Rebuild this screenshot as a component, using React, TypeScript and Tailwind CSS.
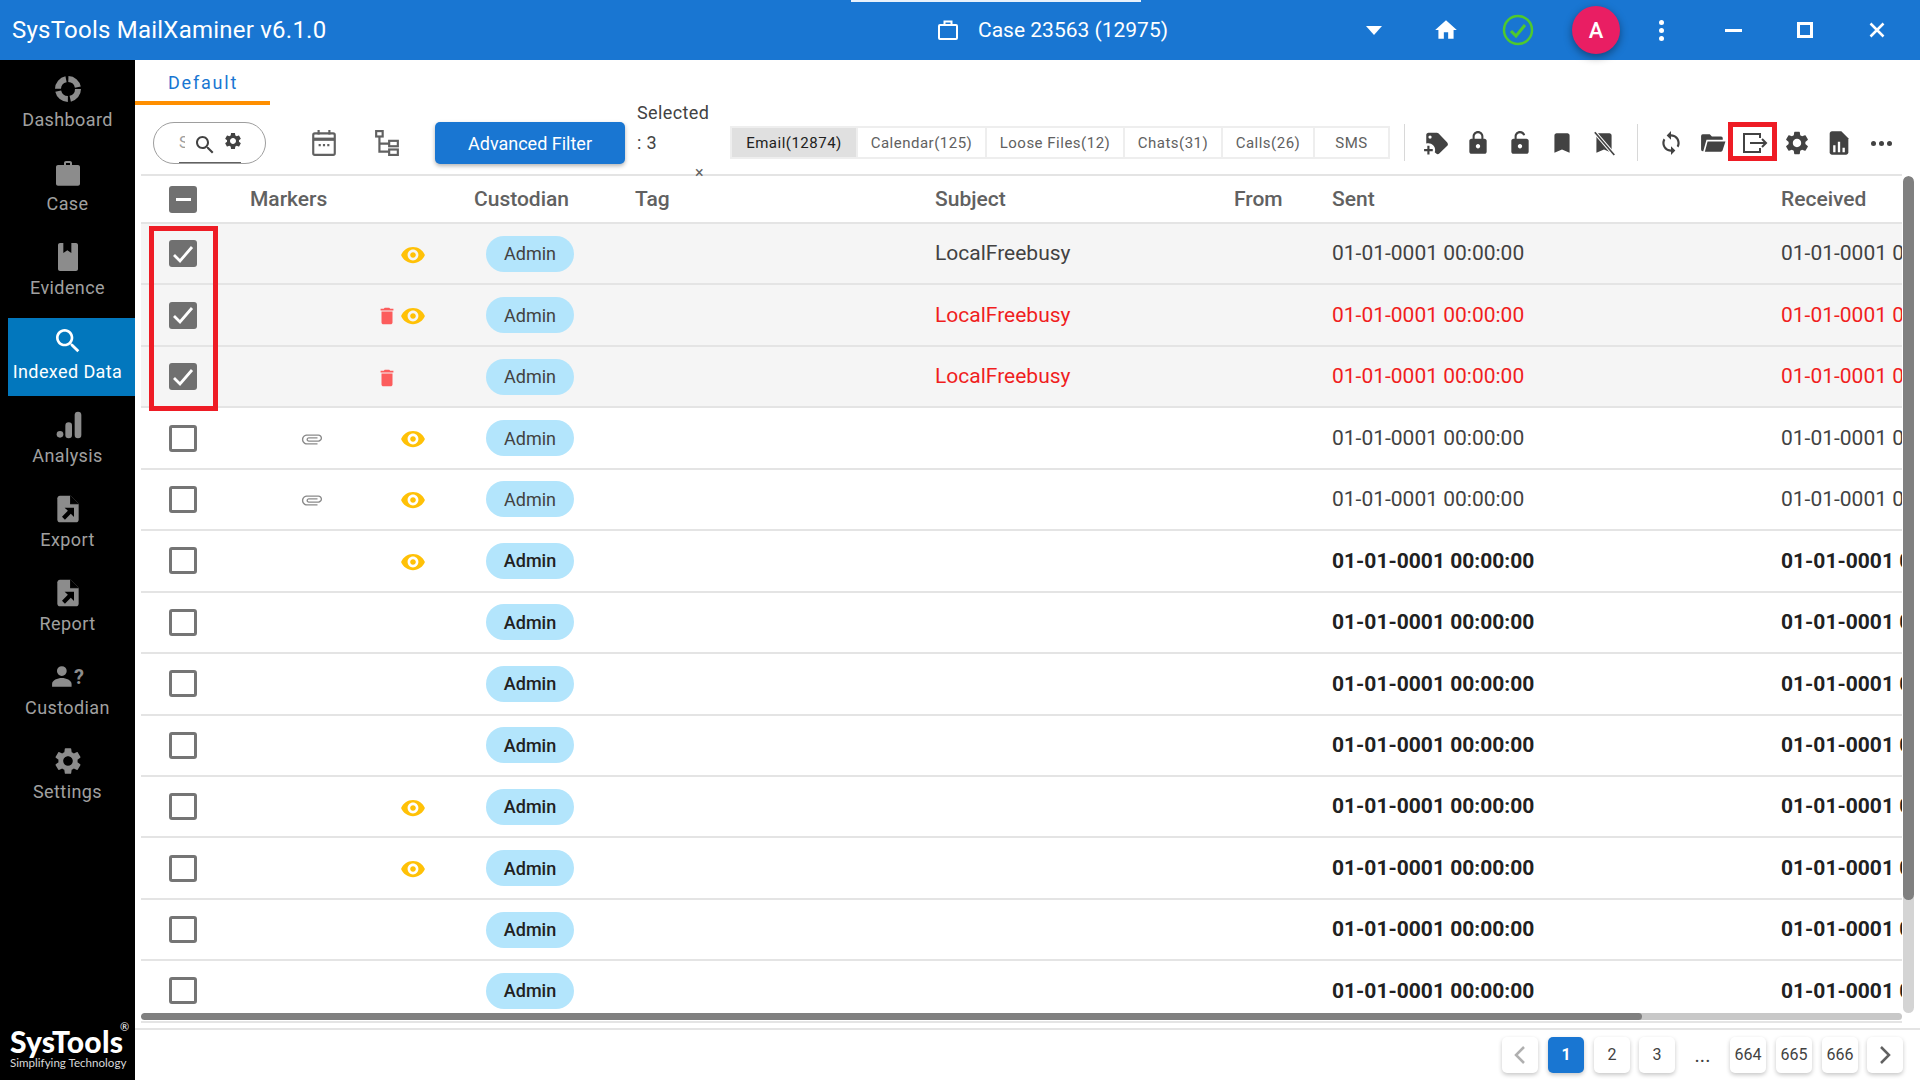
import React from "react";

const P = {
  home: "M10 20v-6h4v6h5v-8h3L12 3 2 12h3v8z",
  lock: "M18 8h-1V6c0-2.76-2.24-5-5-5S7 3.24 7 6v2H6c-1.1 0-2 .9-2 2v10c0 1.1.9 2 2 2h12c1.1 0 2-.9 2-2V10c0-1.1-.9-2-2-2zm-6 9c-1.1 0-2-.9-2-2s.9-2 2-2 2 .9 2 2-.9 2-2 2zm3.1-9H8.9V6c0-1.71 1.39-3.1 3.1-3.1 1.71 0 3.1 1.39 3.1 3.1v2z",
  unlock: "M18 8H8.9V6c0-1.71 1.39-3.1 3.1-3.1 1.4 0 2.6.95 3 2.2l1.8-.6C16.2 2.5 14.3 1 12 1 9.24 1 7 3.24 7 6v2H6c-1.1 0-2 .9-2 2v10c0 1.1.9 2 2 2h12c1.1 0 2-.9 2-2V10c0-1.1-.9-2-2-2zm-6 9c-1.1 0-2-.9-2-2s.9-2 2-2 2 .9 2 2-.9 2-2 2z",
  bookmark: "M17 3H7c-1.1 0-1.99.9-1.99 2L5 21l7-3 7 3V5c0-1.1-.9-2-2-2z",
  gear: "M19.14 12.94c.04-.3.06-.61.06-.94 0-.32-.02-.64-.07-.94l2.03-1.58c.18-.14.23-.41.12-.61l-1.92-3.32c-.12-.22-.37-.29-.59-.22l-2.39.96c-.5-.38-1.03-.7-1.62-.94l-.36-2.54c-.04-.24-.24-.41-.48-.41h-3.84c-.24 0-.43.17-.47.41l-.36 2.54c-.59.24-1.13.57-1.62.94l-2.39-.96c-.22-.08-.47 0-.59.22L2.74 8.87c-.12.21-.08.47.12.61l2.03 1.58c-.05.3-.09.63-.09.94s.02.64.07.94l-2.03 1.58c-.18.14-.23.41-.12.61l1.92 3.32c.12.22.37.29.59.22l2.39-.96c.5.38 1.03.7 1.62.94l.36 2.54c.05.24.24.41.48.41h3.84c.24 0 .44-.17.47-.41l.36-2.54c.59-.24 1.13-.56 1.62-.94l2.39.96c.22.08.47 0 .59-.22l1.92-3.32c.12-.22.07-.47-.12-.61l-2.01-1.58zM12 15.6c-1.98 0-3.6-1.62-3.6-3.6s1.62-3.6 3.6-3.6 3.6 1.62 3.6 3.6-1.62 3.6-3.6 3.6z",
  eye: "M12 4.5C7 4.5 2.73 7.61 1 12c1.73 4.39 6 7.5 11 7.5s9.27-3.11 11-7.5c-1.73-4.39-6-7.5-11-7.5zM12 17c-2.76 0-5-2.24-5-5s2.24-5 5-5 5 2.24 5 5-2.24 5-5 5zm0-7.6c-1.44 0-2.6 1.16-2.6 2.6s1.16 2.6 2.6 2.6 2.6-1.16 2.6-2.6-1.16-2.6-2.6-2.6z",
  trash: "M6 19c0 1.1.9 2 2 2h8c1.1 0 2-.9 2-2V7H6v12zM19 4h-3.5l-1-1h-5l-1 1H5v2h14V4z",
  clip: "M16.5 6v11.5c0 2.21-1.79 4-4 4s-4-1.79-4-4V5c0-1.38 1.12-2.5 2.5-2.5s2.5 1.12 2.5 2.5v10.5c0 .55-.45 1-1 1s-1-.45-1-1V6H10v9.5c0 1.38 1.12 2.5 2.5 2.5s2.5-1.12 2.5-2.5V5c0-2.21-1.79-4-4-4S7 2.79 7 5v12.5c0 3.04 2.46 5.5 5.5 5.5s5.5-2.46 5.5-5.5V6h-1.5z",
  search: "M15.5 14h-.79l-.28-.27C15.41 12.59 16 11.11 16 9.5 16 5.91 13.09 3 9.5 3S3 5.91 3 9.5 5.91 16 9.5 16c1.61 0 3.09-.59 4.23-1.57l.27.28v.79l5 4.99L20.49 19l-4.99-5zm-6 0C7.01 14 5 11.99 5 9.5S7.01 5 9.5 5 14 7.01 14 9.5 11.99 14 9.5 14z",
  sync: "M12 4V1L8 5l4 4V6c3.31 0 6 2.69 6 6 0 1.01-.25 1.97-.7 2.8l1.46 1.46C19.54 15.03 20 13.57 20 12c0-4.42-3.58-8-8-8zm0 14c-3.31 0-6-2.69-6-6 0-1.01.25-1.97.7-2.8L5.24 7.74C4.46 8.97 4 10.43 4 12c0 4.42 3.58 8 8 8v3l4-4-4-4v3z",
  folder: "M1 5.5A1.5 1.5 0 0 1 2.5 4H9l2 2h8.5A1.5 1.5 0 0 1 21 7.5V9H6L3 19.5H2.5A1.5 1.5 0 0 1 1 18V5.5zM7 10.5h16.5L20.8 19a1.5 1.5 0 0 1-1.4 1H4.5L7 10.5z",
  person: "M10 11a4.5 4.5 0 1 0 0-9 4.500 4.500 0 0 0 0 9zM10 13c-4 0-9 2-9 5.500V21h18v-2.500C19 15 14 13 10 13z",
};

function Icon({ d, size = 24, className = "" }: { d: string; size?: number; className?: string }) {
  return (
    <svg width={size} height={size} viewBox="0 0 24 24" fill="currentColor" className={className}>
      <path d={d} fillRule="evenodd" />
    </svg>
  );
}

function FileArrow({ size = 32 }: { size?: number }) {
  return (
    <svg width={size} height={size} viewBox="0 0 24 24" fill="currentColor">
      <path d="M14 2H6c-1.100 0-2 .9-2 2v16c0 1.100.9 2 2 2h12c1.100 0 2-.9 2-2V8l-6-6z" />
      <path d="M14 2v6h6" fill="#000" stroke="#000" strokeWidth="0.8" />
      <path d="M9.500 11h7v7l-2.400-2.400-4.400 4.400-2.200-2.200 4.400-4.400z" fill="#000" />
    </svg>
  );
}

const navItems: { label: string; icon: React.ReactNode }[] = [
  {
    label: "Dashboard",
    icon: (
      <svg width="32" height="32" viewBox="0 0 24 24" fill="none" stroke="currentColor" strokeWidth="4.500">
        <circle cx="12" cy="12" r="7.500" strokeDasharray="10 1.800" />
      </svg>
    ),
  },
  {
    label: "Case",
    icon: (
      <svg width="32" height="32" viewBox="0 0 24 24" fill="currentColor">
        <path d="M9 6V4.500C9 3.700 9.700 3 10.500 3h3c.8 0 1.500.7 1.500 1.500V6h4.500c.8 0 1.500.7 1.500 1.500V20c0 .8-.7 1.500-1.500 1.500h-15C3.700 21.500 3 20.800 3 20V7.500C3 6.700 3.700 6 4.500 6H9zm1.500 0h3V4.500h-3V6z" />
      </svg>
    ),
  },
  {
    label: "Evidence",
    icon: (
      <svg width="32" height="32" viewBox="0 0 24 24" fill="currentColor">
        <path d="M6 1.500h2.500V9l3-2 3 2V1.500H18c.8 0 1.500.7 1.500 1.500v18c0 .8-.7 1.500-1.500 1.500H6c-.8 0-1.500-.7-1.500-1.500V3c0-.8.7-1.500 1.500-1.500z" />
      </svg>
    ),
  },
  { label: "Indexed Data", icon: <Icon d={P.search} size={32} /> },
  {
    label: "Analysis",
    icon: (
      <svg width="32" height="32" viewBox="0 0 24 24" fill="currentColor">
        <circle cx="6" cy="19" r="2.500" />
        <rect x="10" y="10" width="5" height="12" rx="2.500" />
        <rect x="17" y="2" width="5" height="20" rx="2.500" />
      </svg>
    ),
  },
  { label: "Export", icon: <FileArrow /> },
  { label: "Report", icon: <FileArrow /> },
  {
    label: "Custodian",
    icon: (
      <div className="flex items-end">
        <Icon d={P.person} size={26} />
        <span className="text-[20px] leading-[26px] font-bold -ml-[3px]">?</span>
      </div>
    ),
  },
  { label: "Settings", icon: <Icon d={P.gear} size={32} /> },
];

function Sidebar() {
  return (
    <aside className="w-[135px] shrink-0 bg-black flex flex-col relative">
      <div className="flex flex-col gap-[6px] pt-[6px]">
        {navItems.map((n) => {
          const active = n.label === "Indexed Data";
          return (
            <div
              key={n.label}
              className={`h-[78px] flex flex-col items-center ${active ? "bg-[#0277bd] text-white ml-[8px] pr-[8px]" : "text-[#8c8c8c]"}`}
            >
              <div className="h-[32px] mt-[7px] flex items-center justify-center">{n.icon}</div>
              <div className={`text-[18px] leading-[24px] mt-[3px] tracking-[0.4px] whitespace-nowrap ${active ? "" : "text-[#a0a0a0]"}`}>{n.label}</div>
            </div>
          );
        })}
      </div>
      <div className="mt-auto pb-[9px] pl-[10px] text-white relative font-['Lato',sans-serif]">
        <div className="text-[30px] leading-[28px] font-black tracking-[0.2px]">SysTools</div>
        <div className="text-[11.6px] leading-[16px] text-[#d8d8d8] whitespace-nowrap">Simplifying Technology</div>
        <span className="absolute left-[120px] top-[-6px] text-[11px] leading-[12px]">®</span>
      </div>
    </aside>
  );
}

function Header() {
  return (
    <header className="h-[60px] bg-[#1976d2] text-white flex items-center relative shrink-0">
      <div className="absolute left-[851px] top-0 w-[290px] h-[2px] bg-white/90" />
      <div className="text-[24px] tracking-[0.23px] pl-[12px] w-[936px] whitespace-nowrap">SysTools MailXaminer v6.1.0</div>
      <svg width="24" height="24" viewBox="0 0 24 24" fill="none" stroke="currentColor" strokeWidth="2" className="shrink-0">
        <rect x="3" y="7" width="18" height="14" rx="1" />
        <path d="M8.500 7V3.500h7V7" />
      </svg>
      <div className="text-[21px] ml-[18px] mt-[2px] w-[384px] whitespace-nowrap">Case 23563 (12975)</div>
      <div className="w-[24px] flex justify-center">
        <div className="w-0 h-0 border-l-[8px] border-r-[8px] border-t-[9px] border-l-transparent border-r-transparent border-t-white" />
      </div>
      <div className="ml-[46px] w-[28px] flex justify-center"><Icon d={P.home} size={26} /></div>
      <div className="ml-[42px] w-[32px] flex justify-center">
        <svg width="32" height="32" viewBox="0 0 32 32" fill="none" stroke="#4fc92d" strokeWidth="2.500">
          <circle cx="16" cy="16" r="14" />
          <path d="M9 17l5 5 9-11" strokeWidth="3" />
        </svg>
      </div>
      <div className="ml-[38px] w-[48px] h-[48px] rounded-full bg-[#e91e63] flex items-center justify-center text-[22px] font-medium shadow-[0_3px_8px_rgba(0,0,0,0.4)]">A</div>
      <div className="ml-[25px] w-[32px] flex flex-col items-center gap-[3px]">
        <span className="w-[5px] h-[5px] rounded-full bg-white" />
        <span className="w-[5px] h-[5px] rounded-full bg-white" />
        <span className="w-[5px] h-[5px] rounded-full bg-white" />
      </div>
      <div className="ml-[40px] w-[32px] flex justify-center"><div className="w-[17px] h-[3px] bg-white" /></div>
      <div className="ml-[40px] w-[32px] flex justify-center"><div className="w-[16px] h-[16px] border-[3px] border-white" /></div>
      <div className="ml-[40px] w-[32px] flex justify-center">
        <svg width="16" height="16" viewBox="0 0 16 16" stroke="currentColor" strokeWidth="2.500"><path d="M1.500 1.500l13 13M14.500 1.500l-13 13" /></svg>
      </div>
    </header>
  );
}

const tabs = [
  ["Email(12874)", 124],
  ["Calendar(125)", 129],
  ["Loose Files(12)", 138],
  ["Chats(31)", 98],
  ["Calls(26)", 92],
  ["SMS", 75],
] as const;

function Toolbar() {
  const iconCls = "w-[42px] flex items-center justify-center text-[#424242]";
  return (
    <div className="h-[69px] flex items-start pt-[17px] shrink-0">
      <div className="ml-[18px] w-[113px] h-[42px] rounded-full border border-[#9e9e9e] flex items-center relative shrink-0">
        <span className="ml-[25px] w-[6px] overflow-hidden text-[16px] text-[#9e9e9e]">S</span>
        <Icon d={P.search} size={24} className="text-[#424242] ml-[8px] mt-[4px]" />
        <Icon d={P.gear} size={20} className="text-[#424242] ml-[6px] -mt-[5px]" />
        <div className="absolute left-[25px] bottom-0 w-[62px] h-[1px] bg-[#616161]" />
      </div>
      <div className="ml-[42px] w-[32px] h-[42px] flex items-center justify-center text-[#616161] shrink-0">
        <svg width="26" height="28" viewBox="0 0 24 26" fill="none" stroke="currentColor" strokeWidth="2">
          <rect x="2" y="4" width="20" height="20" rx="1.500" />
          <path d="M2 9.500h20" strokeWidth="3" />
          <path d="M7 1v4M17 1v4" />
          <path d="M7 15h2M11 15h2M15 15h2" />
        </svg>
      </div>
      <div className="ml-[31px] w-[32px] h-[42px] flex items-center justify-center text-[#616161] shrink-0">
        <svg width="26" height="26" viewBox="0 0 24 24" fill="none" stroke="currentColor" strokeWidth="2">
          <rect x="2" y="1" width="6" height="5" />
          <rect x="14" y="10" width="8" height="5" />
          <rect x="14" y="18" width="8" height="5" />
          <path d="M5 6v14h9M5 12.500h9" />
        </svg>
      </div>
      <button className="ml-[32px] w-[190px] h-[42px] rounded-[5px] bg-[#1976d2] text-white text-[18px] shrink-0 shadow-[0_2px_4px_rgba(0,0,0,0.3)]">Advanced Filter</button>
      <div className="ml-[12px] w-[93px] shrink-0 relative z-10 -mt-[24px] text-[18px] leading-[30px] tracking-[0.4px] text-[#424242]">
        <div>Selected</div>
        <div>: 3</div>
        <span className="absolute left-[58px] top-[67px] text-[16px] leading-[16px] text-[#616161]">×</span>
      </div>
      <div className="h-[33px] mt-[4px] flex border-2 border-[#eeeeee] shrink-0">
        {tabs.map(([t, w], i) => (
          <div
            key={t}
            style={{ width: w }}
            className={`flex items-center justify-center pt-[1px] text-[15px] tracking-[0.5px] whitespace-nowrap ${i ? "border-l-2 border-[#eeeeee] text-[#616161]" : "bg-[#e0e0e0] text-[#212121]"}`}
          >
            {t}
          </div>
        ))}
      </div>
      <div className="ml-[14px] w-[1px] h-[37px] mt-[2px] bg-[#d8d8d8] shrink-0" />
      <div className="flex h-[42px] ml-[10px] shrink-0">
        <div className={iconCls}>
          <svg width="26" height="26" viewBox="0 0 24 24" fill="currentColor">
            <path d="M22.400 11.600l-8.200-8.500c-.4-.4-.9-.6-1.400-.6H5C3.900 2.500 3 3.400 3 4.500V12.500c.6-.2 1.300-.3 2-.3 3.400 0 6.200 2.800 6.200 6.200 0 .8-.1 1.400-.4 2.100l1.400 1.200c.8.800 2 .8 2.800 0l7.400-7.100c.8-.8.800-2.100 0-2.900zM6.500 8A1.500 1.500 0 1 1 6.500 5a1.500 1.500 0 0 1 0 3z" />
            <path d="M4 14.500h2v3h3v2H6v3H4v-3H1v-2h3z" />
          </svg>
        </div>
        <div className={iconCls}><Icon d={P.lock} size={26} /></div>
        <div className={iconCls}><Icon d={P.unlock} size={26} /></div>
        <div className={iconCls}><Icon d={P.bookmark} size={26} /></div>
        <div className={iconCls}>
          <svg width="26" height="26" viewBox="0 0 24 24" fill="currentColor">
            <path d={P.bookmark} />
            <path d="M3 1.500l18 21" stroke="#fff" strokeWidth="3.500" />
            <path d="M3.500 2l18 21" stroke="currentColor" strokeWidth="1.500" />
          </svg>
        </div>
      </div>
      <div className="ml-[12px] w-[1px] h-[37px] mt-[2px] bg-[#d8d8d8] shrink-0" />
      <div className="flex h-[42px] ml-[12px] shrink-0">
        <div className={iconCls}><Icon d={P.sync} size={26} /></div>
        <div className={iconCls}><Icon d={P.folder} size={26} /></div>
        <div className={`${iconCls} relative`}>
          <svg width="28" height="24" viewBox="0 0 28 24" fill="none" stroke="currentColor" strokeWidth="2">
            <path d="M19 7V3H3v18h16v-4" />
            <path d="M9 12h16M21 8l4 4-4 4" />
          </svg>
          <div className="absolute left-[-6px] top-0 w-[49px] h-[39px] border-[5px] border-[#ee1c25]" />
        </div>
        <div className={iconCls}><Icon d={P.gear} size={28} /></div>
        <div className={iconCls}>
          <svg width="28" height="28" viewBox="0 0 24 24" fill="currentColor">
            <path d="M14 2H6c-1.100 0-2 .9-2 2v16c0 1.100.9 2 2 2h12c1.100 0 2-.9 2-2V8l-6-6z" />
            <path d="M7 20v-6h2v6zM11 20v-9h2v9zM15 20v-4h2v4z" fill="#fff" />
          </svg>
        </div>
        <div className={`${iconCls} gap-[3px]`}>
          <span className="w-[5px] h-[5px] rounded-full bg-[#424242]" />
          <span className="w-[5px] h-[5px] rounded-full bg-[#424242]" />
          <span className="w-[5px] h-[5px] rounded-full bg-[#424242]" />
        </div>
      </div>
    </div>
  );
}

type RowData = { checked?: boolean; clip?: boolean; trash?: boolean; eye?: boolean; red?: boolean; bold?: boolean; subject?: string };

const rows: RowData[] = [
  { checked: true, eye: true, subject: "LocalFreebusy" },
  { checked: true, trash: true, eye: true, red: true, subject: "LocalFreebusy" },
  { checked: true, trash: true, red: true, subject: "LocalFreebusy" },
  { clip: true, eye: true },
  { clip: true, eye: true },
  { eye: true, bold: true },
  { bold: true },
  { bold: true },
  { bold: true },
  { eye: true, bold: true },
  { eye: true, bold: true },
  { bold: true },
  { bold: true },
];

const gridCls = "grid grid-cols-[109px_224px_161px_300px_299px_98px_449px_300px] w-[1940px]";

function Checkbox({ checked }: { checked?: boolean }) {
  return (
    <div className={`w-[28px] h-[27px] rounded-[3px] flex items-center justify-center ${checked ? "bg-[#707070]" : "border-[3px] border-[#757575] bg-white"}`}>
      {checked && (
        <svg width="24" height="24" viewBox="0 0 24 24" fill="none" stroke="#fff" strokeWidth="2.800"><path d="M3 13l6 6L21 5" /></svg>
      )}
    </div>
  );
}

function Row({ r }: { r: RowData }) {
  const textCls = r.red ? "text-[#f01e1e]" : r.bold ? "text-[#212121] font-bold" : "text-[#424242]";
  return (
    <div className={`${gridCls} h-[61.45px] items-center border-b-2 border-[#e4e4e4] text-[21px] ${r.checked ? "bg-[#f5f5f5]" : "bg-white"}`}>
      <div className="pl-[28px]"><Checkbox checked={r.checked} /></div>
      <div className="flex items-center mt-[2px] pl-[48px]">
        <div className="w-[28px] flex justify-center">
          {r.clip && <Icon d={P.clip} size={22} className="rotate-90 text-[#8a8a8a]" />}
        </div>
        <div className="ml-[50px] w-[22px] flex justify-center">
          {r.trash && <Icon d={P.trash} size={24} className="text-[#fc5c5c]" />}
        </div>
        <div className="w-[30px] flex justify-center">
          {r.eye && <Icon d={P.eye} size={26} className="text-[#ffc107]" />}
        </div>
      </div>
      <div className="pl-[12px]">
        <div className={`w-[88px] h-[36px] rounded-full bg-[#b3e5fc] flex items-center justify-center text-[18px] ${r.bold ? "font-medium text-[#212121]" : "text-[#424242]"}`}>Admin</div>
      </div>
      <div />
      <div className={`whitespace-nowrap pt-[1px] ${textCls}`}>{r.subject}</div>
      <div />
      <div className={`whitespace-nowrap pt-[1px] ${textCls}`}>01-01-0001 00:00:00</div>
      <div className={`whitespace-nowrap pt-[1px] ${textCls}`}>01-01-0001 00:00:00</div>
    </div>
  );
}

function Table() {
  const heads = ["", "Markers", "Custodian", "Tag", "Subject", "From", "Sent", "Received"];
  return (
    <div className="ml-[6px] flex-1 min-h-0 relative">
      <div className="absolute inset-0 right-[18px] overflow-hidden border-t-2 border-[#e4e4e4]">
        <div className={`${gridCls} h-[48px] items-center border-b-2 border-[#e4e4e4] bg-white text-[21px] font-medium text-[#616161]`}>
          <div className="pl-[28px]">
            <div className="w-[28px] h-[27px] rounded-[3px] bg-[#707070] flex items-center justify-center">
              <div className="w-[15px] h-[3px] bg-white" />
            </div>
          </div>
          {heads.slice(1).map((h) => (
            <div key={h} className="pt-[2px]">{h}</div>
          ))}
        </div>
        {rows.map((r, i) => (
          <Row key={i} r={r} />
        ))}
      </div>
      <div className="absolute left-[8px] top-[52px] w-[69px] h-[185px] border-[5px] border-[#ee1c25]" />
      <div className="absolute left-0 top-[839px] w-[1761px] h-[7px] rounded-full bg-[#c8c8c8] overflow-hidden">
        <div className="w-[1501px] h-full bg-[#808080] rounded-full" />
      </div>
      <div className="absolute left-[1762px] top-[2px] w-[11px] h-[837px] rounded-full bg-[#d4d4d4] overflow-hidden">
        <div className="w-full h-[724px] bg-[#808080] rounded-full" />
      </div>
    </div>
  );
}

function PageBtn({ children, active, w = 36, ml = 0, dim }: { children: React.ReactNode; active?: boolean; w?: number; ml?: number; dim?: boolean }) {
  return (
    <div
      style={{ width: w, marginLeft: ml }}
      className={`h-[36px] rounded-[5px] flex items-center justify-center text-[16px] shadow-[0_2px_4px_rgba(0,0,0,0.22)] ${active ? "bg-[#1976d2] text-white font-bold" : dim ? "bg-white text-[#b0b0b0]" : "bg-white text-[#424242]"}`}
    >
      {children}
    </div>
  );
}

function Chevron({ dir }: { dir: "l" | "r" }) {
  return (
    <svg width="16" height="20" viewBox="0 0 16 20" fill="none" stroke="currentColor" strokeWidth="2.500">
      <path d={dir === "l" ? "M12 2L4 10l8 8" : "M4 2l8 8-8 8"} />
    </svg>
  );
}

function Footer() {
  return (
    <footer className="h-[52px] shrink-0 border-t-2 border-[#e4e4e4] flex items-start justify-end pt-[7px] pr-[17px]">
      <PageBtn dim><Chevron dir="l" /></PageBtn>
      <PageBtn active ml={10}>1</PageBtn>
      <PageBtn ml={10}>2</PageBtn>
      <PageBtn ml={9}>3</PageBtn>
      <div className="w-[55px] h-[36px] flex items-center justify-center text-[20px] text-[#424242]">...</div>
      <PageBtn>664</PageBtn>
      <PageBtn ml={10}>665</PageBtn>
      <PageBtn ml={10}>666</PageBtn>
      <PageBtn ml={9}><span className="text-[#616161]"><Chevron dir="r" /></span></PageBtn>
    </footer>
  );
}

export default function App() {
  return (
    <div className="w-[1920px] h-[1080px] overflow-hidden flex flex-col bg-white font-['Roboto',sans-serif]">
      <Header />
      <div className="flex flex-1 min-h-0">
        <Sidebar />
        <main className="flex-1 min-w-0 flex flex-col">
          <div className="h-[45px] shrink-0">
            <div className="w-[135px] h-full border-b-[4px] border-[#ff8f00] text-[#1976d2] text-[18px] tracking-[1.8px] pl-[33px] pt-[9px]">Default</div>
          </div>
          <Toolbar />
          <Table />
          <Footer />
        </main>
      </div>
    </div>
  );
}
